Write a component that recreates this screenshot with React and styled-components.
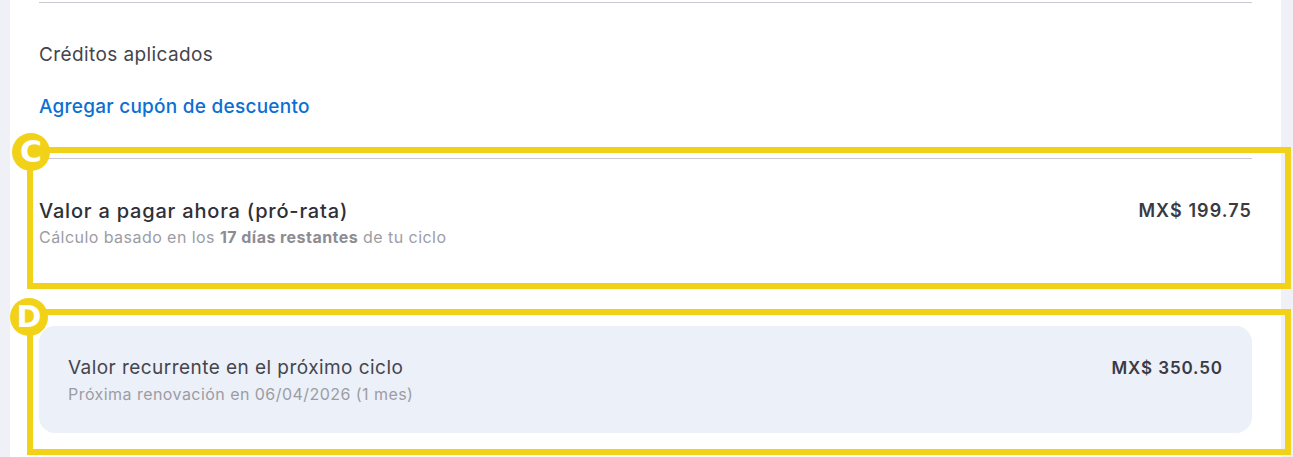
import React from 'react'
import styled, { createGlobalStyle } from 'styled-components'

const GlobalStyle = createGlobalStyle`
  html, body {
    margin: 0;
    padding: 0;
    background: #eff1f6;
    font-family: Inter, "Noto Sans", sans-serif;
  }
`

const Page = styled.div`
  position: relative;
  height: 457px;
  padding: 0 12px 0 10px;
  overflow: hidden;
`

const Card = styled.div`
  background: #fff;
  height: 100%;
  padding: 2px 29px 0 29px;
  box-sizing: border-box;
`

const Divider = styled.div`
  height: 1px;
  background: #c9c9d1;
`

const Label = styled.div`
  margin-top: 40px;
  font-size: 19px;
  letter-spacing: 0.4px;
  line-height: 24px;
  color: #45454d;
`

const CouponLink = styled.a`
  display: block;
  margin-top: 28px;
  font-size: 19px;
  letter-spacing: 0.25px;
  line-height: 24px;
  font-weight: 500;
  color: #0b6fd3;
  text-decoration: none;
`

const Summary = styled.div`
  margin-top: 39px;
`

const Row = styled.div`
  display: flex;
  justify-content: space-between;
  align-items: flex-start;
`

const Title = styled.div`
  font-size: ${({ $big }) => ($big ? '20px' : '19px')};
  letter-spacing: ${({ $big }) => ($big ? '0.8px' : '0.45px')};
  line-height: 24px;
  font-weight: ${({ $big }) => ($big ? 500 : 400)};
  color: ${({ $big }) => ($big ? '#2f2f37' : '#45454d')};
`

const Sub = styled.div`
  margin-top: ${({ $gap }) => $gap}px;
  font-size: 16px;
  letter-spacing: 0.45px;
  line-height: 20px;
  color: #9c9ca4;
  b {
    font-weight: 700;
    color: #8c8c94;
  }
`

const Amount = styled.div`
  font-size: ${({ $small }) => ($small ? '17px' : '18px')};
  letter-spacing: ${({ $small }) => ($small ? '0.9px' : '1.1px')};
  line-height: 24px;
  font-weight: 600;
  color: #3a3a44;
`

const Recurring = styled.div`
  margin-top: 79px;
  background: #ecf0f8;
  border-radius: 16px;
  height: 107px;
  box-sizing: border-box;
  padding: 30px 29px 0 29px;
`

const Marker = styled.div`
  position: absolute;
  left: 27px;
  top: ${({ $top }) => $top}px;
  width: 1264px;
  height: ${({ $h }) => $h}px;
  border: 6px solid #f2d218;
  box-sizing: border-box;
  pointer-events: none;
`

const Badge = styled.div`
  position: absolute;
  left: ${({ $x }) => $x - 19}px;
  top: ${({ $y }) => $y - 19}px;
  width: 38px;
  height: 38px;
  border-radius: 50%;
  background: #f2d218;
  color: #fff;
  font-family: "DejaVu Sans", sans-serif;
  font-weight: 700;
  font-size: 30px;
  line-height: 38px;
  text-align: center;
`

export default function App() {
  return (
    <>
      <GlobalStyle />
      <Page>
        <Card>
          <Divider />
          <Label>Créditos aplicados</Label>
          <CouponLink href="#">Agregar cupón de descuento</CouponLink>
          <Summary>
            <Divider />
            <Row style={{ marginTop: 40 }}>
              <div>
                <Title $big>Valor a pagar ahora (pró-rata)</Title>
                <Sub $gap={4}>
                  Cálculo basado en los <b>17 días restantes</b> de tu ciclo
                </Sub>
              </div>
              <Amount>MX$ 199.75</Amount>
            </Row>
          </Summary>
          <Recurring>
            <Row>
              <div>
                <Title>Valor recurrente en el próximo ciclo</Title>
                <Sub $gap={4}>Próxima renovación en 06/04/2026 (1 mes)</Sub>
              </div>
              <Amount $small>MX$ 350.50</Amount>
            </Row>
          </Recurring>
        </Card>
        <Marker $top={147} $h={142} />
        <Badge $x={31} $y={152}>C</Badge>
        <Marker $top={309} $h={146} />
        <Badge $x={29} $y={317}>D</Badge>
      </Page>
    </>
  )
}
